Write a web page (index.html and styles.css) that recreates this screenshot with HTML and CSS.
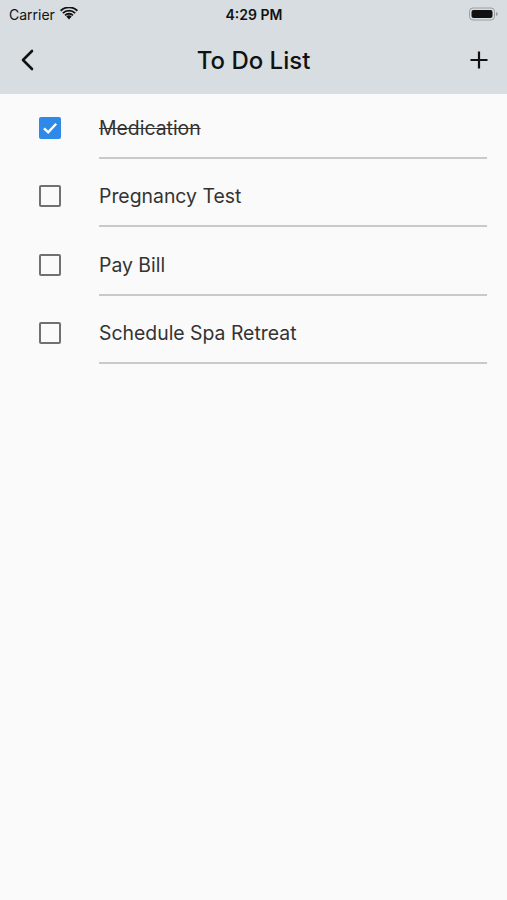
FILE: index.html
```html
<!DOCTYPE html>
<html lang="en">
<head>
    <meta charset="UTF-8">
    <meta name="viewport" content="width=device-width, initial-scale=1.0">
    <title>To Do List</title>
    <link rel="stylesheet" href="styles.css">
</head>
<body>
    <header class="topbar">
        <div class="status">
            <div class="carrier">
                Carrier
                <svg class="wifi" width="18" height="13" viewBox="0 0 18 13">
                    <path d="M9 12.5 L6.3 9.6 A3.9 3.9 0 0 1 11.7 9.6 Z" fill="#111"/>
                    <path d="M4.4 7.7 A6.6 6.6 0 0 1 13.6 7.7 L12.3 9.1 A4.7 4.7 0 0 0 5.7 9.1 Z" fill="#111"/>
                    <path d="M2.2 5.4 A9.8 9.8 0 0 1 15.8 5.4 L14.5 6.8 A7.9 7.9 0 0 0 3.5 6.8 Z" fill="#111"/>
                    <path d="M0 3.1 A12.9 12.9 0 0 1 18 3.1 L16.7 4.5 A11 11 0 0 0 1.3 4.5 Z" fill="#111"/>
                </svg>
            </div>
            <div class="clock">4:29 PM</div>
            <div class="battery">
                <svg width="30" height="14" viewBox="0 0 30 14">
                    <rect x="0.5" y="1" width="25" height="12" rx="3.5" fill="none" stroke="#9a9ea0" stroke-width="1"/>
                    <rect x="2.5" y="3" width="21" height="8" rx="2" fill="#111"/>
                    <path d="M27 5 Q28.8 5.4 28.8 7 Q28.8 8.6 27 9 Z" fill="#9a9ea0"/>
                </svg>
            </div>
        </div>
        <nav class="navbar">
            <svg class="nav-icon" width="20" height="24" viewBox="0 0 20 24">
                <path d="M14 3 L5 12 L14 21" fill="none" stroke="#111" stroke-width="2.6" stroke-linecap="round" stroke-linejoin="round"/>
            </svg>
            <h1 class="title">To Do List</h1>
            <svg class="nav-icon" width="20" height="24" viewBox="0 0 20 24">
                <path d="M10 3.5 V20.5 M1.5 12 H18.5" fill="none" stroke="#111" stroke-width="2.2"/>
            </svg>
        </nav>
    </header>

    <ul class="todos">
        <li class="todo">
            <span class="box checked">
                <svg width="22" height="22" viewBox="0 0 22 22">
                    <path d="M5 11.3 L9.2 15.3 L17.2 6.8" fill="none" stroke="#fff" stroke-width="2.4"/>
                </svg>
            </span>
            <span class="label done">Medication</span>
        </li>
        <li class="todo">
            <span class="box"></span>
            <span class="label">Pregnancy Test</span>
        </li>
        <li class="todo">
            <span class="box"></span>
            <span class="label">Pay Bill</span>
        </li>
        <li class="todo">
            <span class="box"></span>
            <span class="label">Schedule Spa Retreat</span>
        </li>
    </ul>
</body>
</html>
```

FILE: styles.css
```css
body {
    margin: 0;
    background-color: #fafafa;
    font-family: Inter, "Noto Sans", sans-serif;
    color: #333;
    min-height: 100vh;
}
.topbar {
    background-color: #d7dde0;
    height: 94px;
}
.status {
    height: 28px;
    display: flex;
    align-items: center;
    justify-content: space-between;
    padding: 0 8px 0 9px;
    font-size: 14px;
    color: #111;
}
.carrier {
    display: flex;
    align-items: center;
    gap: 5px;
    width: 90px;
}
.wifi {
    margin-top: -2px;
}
.clock {
    font-weight: 600;
}
.battery {
    width: 90px;
    display: flex;
    justify-content: flex-end;
}
.navbar {
    height: 64px;
    display: flex;
    align-items: center;
    justify-content: space-between;
    padding: 0 18px 2px 18px;
}
.nav-icon {
    display: block;
}
.title {
    margin: 0;
    font-size: 24px;
    font-weight: 500;
    color: #111;
}
.todos {
    list-style: none;
    margin: 0;
    padding: 5px 20px 0 39px;
    display: flex;
    flex-direction: column;
    gap: 8.4px;
}
.todo {
    display: flex;
    align-items: stretch;
}
.box {
    width: 18px;
    height: 18px;
    border: 2px solid #707070;
    border-radius: 2px;
    align-self: center;
    margin-top: -2px;
    margin-right: 38px;
    flex: none;
}
.box.checked {
    width: 22px;
    height: 22px;
    border: none;
    border-radius: 2px;
    background-color: #2f89e9;
}
.box svg {
    display: block;
}
.label {
    flex: 1;
    height: 58px;
    display: flex;
    align-items: center;
    border-bottom: 2px solid #c9c9c9;
    font-size: 19.4px;
    color: #333;
}
.done {
    text-decoration: line-through;
}
```
